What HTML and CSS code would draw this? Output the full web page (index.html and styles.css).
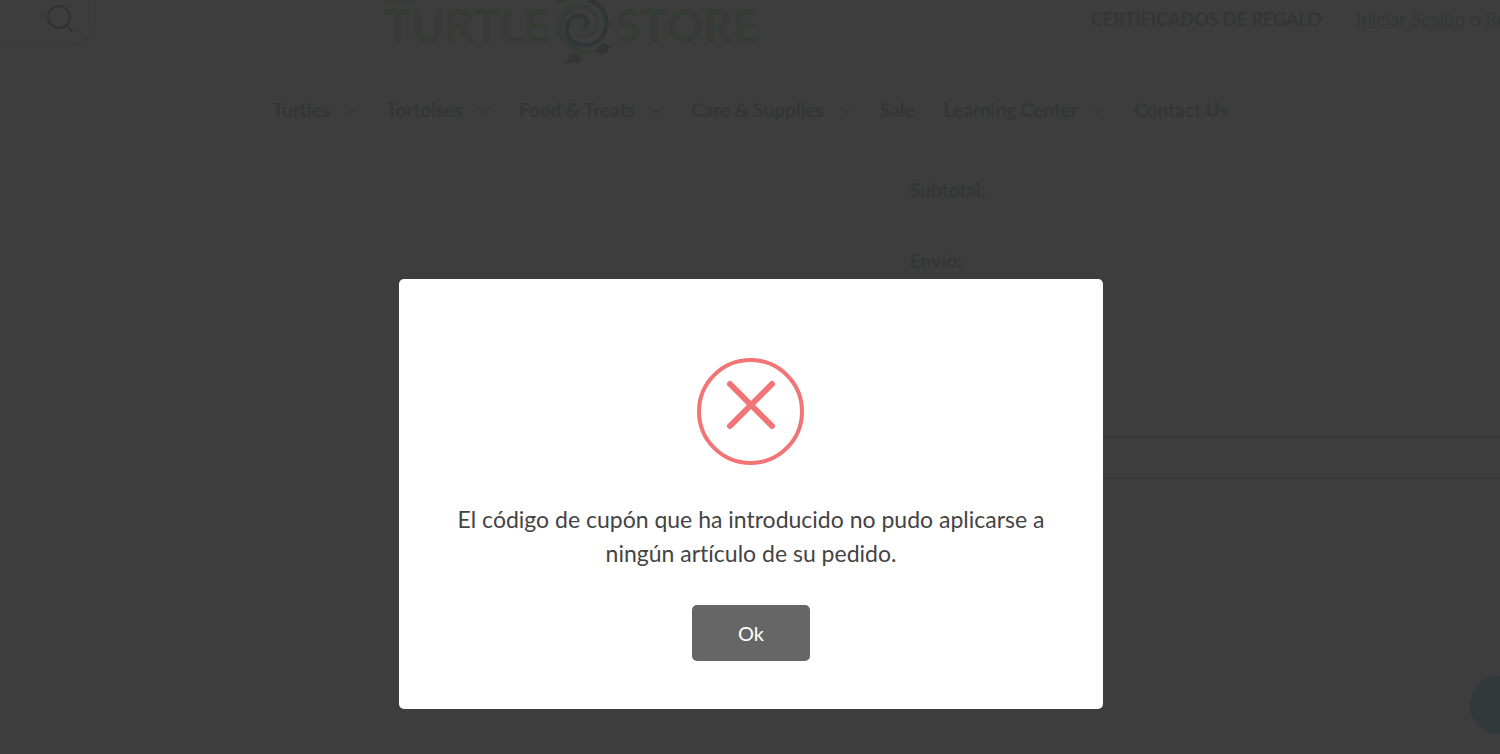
FILE: index.html
```
<!DOCTYPE html>
<html lang="es">
<head>
    <meta charset="UTF-8">
    <meta name="viewport" content="width=device-width, initial-scale=1.0">
    <title>The Turtle Store</title>
    <link rel="stylesheet" href="styles.css">
</head>
<body>
    <header class="header">
        <div class="search">
            <button class="search-btn" aria-label="Buscar">
                <svg width="30" height="30" viewBox="0 0 30 30" fill="none" stroke="currentColor" stroke-width="2" stroke-linecap="round">
                    <circle cx="14" cy="13" r="11"/>
                    <path d="M22 21l5 6"/>
                </svg>
            </button>
        </div>
        <a class="logo" href="#">
            <span class="logo-the">THE</span>
            <span>TURTLE</span>
            <svg class="logo-shell" width="56" height="64" viewBox="0 0 56 64" fill="none">
                <path class="leg" d="M0 0h9l-4 3zM17 53l7 2 2 8H8l5-4zM44 47l4-4 7 3-3 6-6 2-7-3z"/>
                <path class="shell-light" d="M26 3C11 3 1 14 2 28c1 12 11 22 24 24 5 1 9 0 12-1"/>
                <path class="shell-mid" d="M43 24C42 12 33 6 24 7 12 8 5 18 6 29c1 10 8 18 19 21M22 35c10 4 20-2 20-12"/>
                <path class="shell-dark" d="M33 0C48 4 54 18 51 29 48 42 36 46 27 45 17 44 11 37 12 28c1-9 8-13 14-12 7 1 8 9 3 12"/>
            </svg>
            <span>STORE</span>
        </a>
        <div class="account">
            <a class="gift" href="#">CERTIFICADOS DE REGALO</a>
            <span class="login"><a href="#">Iniciar Sesión</a> o <a href="#">Regístrese</a></span>
        </div>
    </header>

    <nav class="menu">
        <a class="drop" href="#">Turtles</a>
        <a class="drop" href="#">Tortoises</a>
        <a class="drop" href="#">Food &amp; Treats</a>
        <a class="drop" href="#">Care &amp; Supplies</a>
        <a href="#">Sale</a>
        <a class="drop" href="#">Learning Center</a>
        <a href="#">Contact Us</a>
    </nav>

    <main class="totals">
        <p>Subtotal:</p>
        <p>Envío:</p>
        <input class="coupon" type="text" aria-label="Código de cupón">
    </main>

    <button class="chat" aria-label="Chat"></button>

    <div class="overlay">
        <div class="modal" role="dialog" aria-modal="true" aria-describedby="message">
            <svg class="error-icon" width="107" height="107" viewBox="0 0 107 107" fill="none" stroke="currentColor">
                <circle cx="53.5" cy="53.5" r="51.5" stroke-width="4"/>
                <path d="M33 26l42 42M75 26L33 68" stroke-width="6" stroke-linecap="round"/>
            </svg>
            <p class="message" id="message">El código de cupón que ha introducido no pudo aplicarse a ningún artículo de su pedido.</p>
            <button class="ok">Ok</button>
        </div>
    </div>
</body>
</html>
```

FILE: styles.css
```
* {
    box-sizing: border-box;
}
body {
    margin: 0;
    min-height: 100vh;
    overflow: hidden;
    background-color: #3d3d3d;
    color: #343535;
    font-family: "Lato", "Noto Sans", sans-serif;
    font-size: 19px;
    font-variant-ligatures: none;
}
a {
    color: inherit;
    text-decoration: none;
}
button {
    font-family: inherit;
    border: none;
    cursor: pointer;
}

/* header */
.header {
    display: grid;
    grid-template-columns: minmax(0, 384fr) minmax(0, 707fr) minmax(0, 409fr);
    align-items: start;
    height: 64px;
}
.search {
    width: 96px;
    height: 44px;
    border: 1px solid #3a3a3a;
    border-width: 0 1px 1px 0;
    border-radius: 0 0 22px 0;
    text-align: right;
}
.search-btn {
    padding: 4px 20px 0 0;
    background: none;
    color: #313333;
}
.logo {
    position: relative;
    display: flex;
    gap: 5px;
    font-size: 45px;
    font-weight: 900;
    line-height: 50px;
    color: #363c35;
}
/* small line that sits over the top of the wordmark */
.logo-the {
    position: absolute;
    top: -10px;
    left: 0;
    font-size: 16px;
    line-height: 16px;
}
.leg {
    fill: #313635;
}
.shell-light {
    stroke: #383c36;
    stroke-width: 2;
}
.shell-mid {
    stroke: #373b36;
    stroke-width: 4;
}
.shell-dark {
    stroke: #303635;
    stroke-width: 4;
}
.account {
    display: flex;
    gap: 34px;
    line-height: 38px;
    white-space: nowrap;
}
.gift {
    font-size: 18px;
    font-weight: 700;
}
.login {
    color: #353737;
}
.login a {
    text-decoration: underline;
}

/* menu */
.menu {
    display: flex;
    justify-content: center;
    gap: 29px;
    padding-top: 31px;
    font-weight: 700;
    line-height: 30px;
    white-space: nowrap;
}
.drop::after {
    content: "";
    display: inline-block;
    width: 7px;
    height: 7px;
    margin: 0 2px 5px 17px;
    border: solid currentColor;
    border-width: 0 1px 1px 0;
    transform: rotate(45deg);
}

/* totals */
.totals {
    margin-left: 60.67%;
    padding-top: 50px;
    font-weight: 700;
}
.totals p {
    margin: 0 0 41px;
    line-height: 30px;
}
.coupon {
    display: block;
    width: 110%;
    height: 43px;
    margin-top: 160px;
    background: none;
    border: 2px solid #393939;
}

.chat {
    position: fixed;
    right: -28px;
    bottom: 20px;
    width: 58px;
    height: 58px;
    border-radius: 50%;
    background-color: #313939;
}

/* modal */
.overlay {
    position: fixed;
    inset: 0;
    padding: 279px 0 0 2px;
}
.modal {
    display: flex;
    flex-direction: column;
    align-items: center;
    width: 47%;
    min-width: 320px;
    margin: 0 auto;
    padding: 79px 56px 48px;
    border-radius: 5px;
    background-color: #fff;
}
.error-icon {
    color: #f27474;
}
.message {
    margin: 37px 0 35px;
    font-size: 23px;
    line-height: 34px;
    text-align: center;
    color: #444;
}
.ok {
    width: 118px;
    height: 56px;
    border-radius: 5px;
    background-color: #666;
    color: #fff;
    font-size: 20px;
}
```
